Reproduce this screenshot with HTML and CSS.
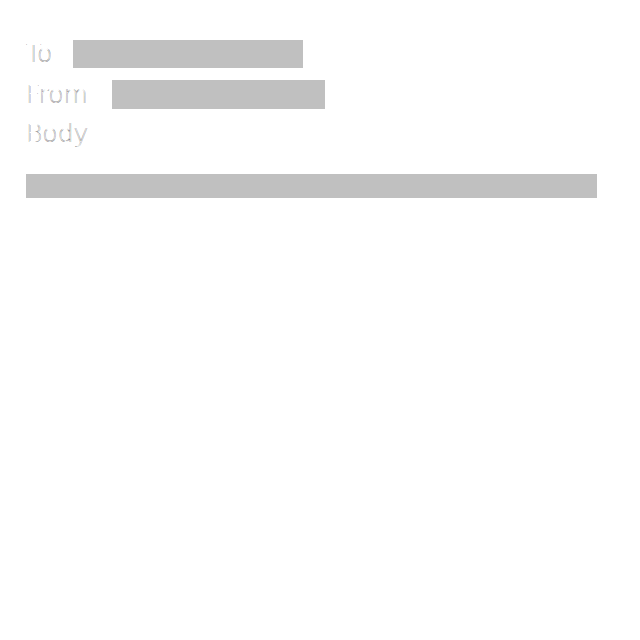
FILE: index.html
```html
<!DOCTYPE html>
<html>
<head>
<meta charset="utf-8">
<link rel="stylesheet" href="styles.css">
</head>
<body>
<form class="mail">
  <div class="row row-to">
    <label class="label">To</label>
    <input class="field field-to" type="text">
  </div>
  <div class="row row-from">
    <label class="label">From</label>
    <input class="field field-from" type="text">
  </div>
  <div class="row row-body">
    <label class="label">Body</label>
  </div>
  <textarea class="body-text" rows="1"></textarea>
</form>
</body>
</html>
```
FILE: styles.css
```css
html, body {
  margin: 0;
  padding: 0;
  background: #fff;
}
.mail {
  padding: 40px 0 0 26px;
  width: 571px;
  display: flex;
  flex-direction: column;
}
.row {
  display: flex;
  align-items: center;
  gap: 21px;
  height: 28px;
}
.row-from {
  margin-top: 12px;
  gap: 24px;
  height: 29px;
}
.row-body {
  margin-top: 8px;
  height: 34px;
}
.label {
  font-family: "DejaVu Sans", sans-serif;
  font-weight: 200;
  font-size: 25px;
  line-height: 28px;
  color: #fff;
  -webkit-text-stroke: 0.2px #000;
}
.field {
  border: none;
  background: #c0c0c0;
  height: 28px;
  padding: 0;
  margin: 0;
  outline: none;
}
.field-to {
  width: 230px;
}
.field-from {
  width: 213px;
  height: 29px;
}
.body-text {
  margin-top: 23px;
  width: 571px;
  height: 24px;
  border: none;
  padding: 0;
  background: #c0c0c0;
  resize: none;
  display: block;
}
```
